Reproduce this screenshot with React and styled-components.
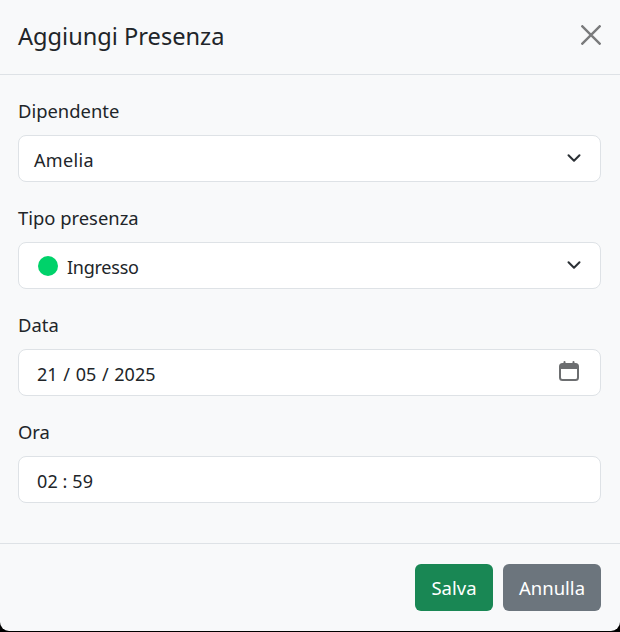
import React from "react";
import styled, { createGlobalStyle } from "styled-components";
import { ChevronDown } from "lucide-react";

const Global = createGlobalStyle`
  html, body { margin: 0; padding: 0; background: #000; }
  * { box-sizing: border-box; }
`;

const Modal = styled.div`
  width: 620px;
  height: 631px;
  background: #f8f9fa;
  border-radius: 0 0 9px 9px;
  color: #212529;
  font-family: "Noto Sans", "Open Sans", sans-serif;
  font-size: 18px;
  display: flex;
  flex-direction: column;
  overflow: hidden;
`;

const Header = styled.header`
  height: 75px;
  flex: none;
  display: flex;
  align-items: center;
  justify-content: space-between;
  padding: 0 19px 4px 18px;
  border-bottom: 1px solid #dee2e6;
`;

const Title = styled.h5`
  margin: 3px 0 0;
  font-size: 23.6px;
  font-weight: 400;
  line-height: 1;
`;

const Close = styled.button`
  width: 20px;
  height: 20px;
  padding: 0;
  border: 0;
  background: none;
  display: flex;
  color: #7a7b7c;
`;

const Body = styled.div`
  flex: 1;
  display: flex;
  flex-direction: column;
  gap: 18px;
  padding: 18px 19px 0 18px;
`;

const Field = styled.div`
  display: flex;
  flex-direction: column;
  gap: 6px;
`;

const Label = styled.label`
  height: 36px;
  line-height: 36px;
  font-size: 18.4px;
`;

const Control = styled.div`
  height: 47px;
  background: #fff;
  border: 1px solid #dee2e6;
  border-radius: 8px;
  display: flex;
  align-items: center;
  justify-content: space-between;
  padding: 0 ${(p) => p.$right || 17}px 0 ${(p) => p.$left || 15}px;
  font-size: 18px;
`;

const Value = styled.span`
  display: flex;
  align-items: center;
  gap: 9px;
`;

const Text = styled.span`
  margin-top: 2px;
  letter-spacing: ${(p) => p.$tracking || 0}px;
  word-spacing: ${(p) => p.$wordGap || 0}px;
`;

const Dot = styled.span`
  width: 20px;
  height: 20px;
  border-radius: 50%;
  background: #00d26a;
`;

const Chevron = styled(ChevronDown)`
  color: #2b3035;
  margin: -1px -2px 0 0;
`;

const Footer = styled.footer`
  height: 88px;
  flex: none;
  display: flex;
  justify-content: flex-end;
  gap: 10px;
  padding: 20px 19px 0;
  border-top: 1px solid #dee2e6;
`;

const Button = styled.button`
  height: 47px;
  padding: 0;
  width: ${(p) => p.$width}px;
  border: 0;
  border-radius: 6px;
  background: ${(p) => p.$bg};
  color: #fff;
  font: inherit;
  font-size: 18.5px;
`;

const CalendarIcon = styled.svg`
  margin-top: -3px;
`;

const Calendar = () => (
  <CalendarIcon width="20" height="20" viewBox="0 0 20 20" fill="none">
    <path d="M5.5 1v3M14.5 1v3" stroke="#6c6e70" strokeWidth="2" strokeLinecap="round" />
    <rect x="1" y="3" width="18" height="16" rx="2.5" stroke="#6c6e70" strokeWidth="2" />
    <rect x="1" y="3" width="18" height="5" fill="#6c6e70" />
  </CalendarIcon>
);

const XIcon = () => (
  <svg width="20" height="20" viewBox="0 0 20 20" fill="none">
    <path d="M0.5 0.5l19 19M19.5 0.5l-19 19" stroke="currentColor" strokeWidth="2.4" />
  </svg>
);

export default function App() {
  return (
    <>
      <Global />
      <Modal>
        <Header>
          <Title>Aggiungi Presenza</Title>
          <Close aria-label="Chiudi"><XIcon /></Close>
        </Header>
        <Body>
          <Field>
            <Label>Dipendente</Label>
            <Control>
              <Text $tracking={0.35}>Amelia</Text>
              <Chevron size={22} strokeWidth={2.2} />
            </Control>
          </Field>
          <Field>
            <Label>Tipo presenza</Label>
            <Control $left={19}>
              <Value><Dot /><Text $tracking={-0.25}>Ingresso</Text></Value>
              <Chevron size={22} strokeWidth={2.2} />
            </Control>
          </Field>
          <Field>
            <Label>Data</Label>
            <Control $left={18} $right={21}>
              <Text $wordGap={1}>21 / 05 / 2025</Text>
              <Calendar />
            </Control>
          </Field>
          <Field>
            <Label>Ora</Label>
            <Control $left={18}>
              <Text $tracking={0.1}>02 : 59</Text>
            </Control>
          </Field>
        </Body>
        <Footer>
          <Button $bg="#198754" $width={78}>Salva</Button>
          <Button $bg="#6c757d" $width={98}>Annulla</Button>
        </Footer>
      </Modal>
    </>
  );
}
